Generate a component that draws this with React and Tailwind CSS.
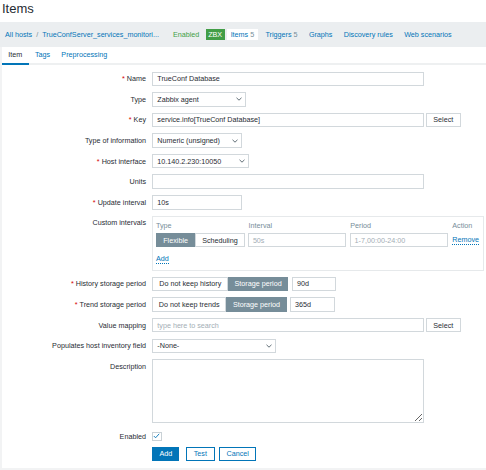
import React from "react";

const FONT = { fontFamily: '"Liberation Sans", Arial, sans-serif' };

function Chevron() {
  return (
    <svg width="6" height="4" viewBox="0 0 6 4" className="shrink-0">
      <polyline points="0.5,0.8 3,3.2 5.5,0.8" fill="none" stroke="#4f5f68" strokeWidth="0.9" />
    </svg>
  );
}

function Row({ label, req, children, top = false }) {
  return (
    <div className={"flex " + (top ? "items-start" : "items-center h-[14.5px]")}>
      <div className="w-[144px] h-[14.5px] flex items-center justify-end text-[#1f2c33] whitespace-nowrap">
        {req && <span className="text-[#d40000] mr-[2px]">*</span>}
        {label}
      </div>
      <div className="ml-[6.3px] flex items-center">{children}</div>
    </div>
  );
}

function Input({ w, value, placeholder }) {
  return (
    <div
      className={
        "h-[14.5px] shrink-0 border border-[#d2d8dc] bg-white flex items-center pl-[4px] whitespace-nowrap overflow-hidden " + w
      }
    >
      {value ? (
        <span className="text-[#1f2c33]">{value}</span>
      ) : (
        <span className="text-[#a3aeb5]">{placeholder}</span>
      )}
    </div>
  );
}

function Select({ w, value }) {
  return (
    <div
      className={
        "h-[14.5px] border border-[#d2d8dc] bg-white flex items-center justify-between pl-[4px] pr-[3px] " + w
      }
    >
      <span className="text-[#1f2c33] whitespace-nowrap">{value}</span>
      <Chevron />
    </div>
  );
}

function GreyButton({ children }) {
  return (
    <div className="ml-[1.5px] h-[14.5px] w-[35px] border border-[#d2d8dc] bg-white flex items-center justify-center text-[#1f2c33]">
      {children}
    </div>
  );
}

function Segmented({ left, right, lw, rw }) {
  return (
    <div className="flex h-[14.5px] shrink-0">
      <div className={"border border-[#d2d8dc] bg-white flex items-center justify-center text-[#1f2c33] whitespace-nowrap " + lw}>{left}</div>
      <div className={"bg-[#768d99] border border-[#768d99] flex items-center justify-center text-white whitespace-nowrap " + rw}>{right}</div>
    </div>
  );
}

export default function App() {
  return (
    <div className="w-[486px] h-[470px] overflow-hidden bg-white text-[7.2px] leading-none" style={FONT}>
      {/* title */}
      <div className="h-[22px] pl-[2px] pt-[2px]">
        <h1 className="text-[13px] leading-none text-[#1f2c33]">Items</h1>
      </div>

      {/* host nav */}
      <div className="h-[25px] bg-[#ebeef0] flex items-center pl-[5px]">
        <span className="text-[#0275b8]">All hosts</span>
        <span className="text-[#768d99] mx-[4px]">/</span>
        <span className="text-[#0275b8]">TrueConfServer_services_monitori...</span>
        <span className="text-[#429e47] ml-[14px]">Enabled</span>
        <span className="ml-[6.3px] bg-[#429e47] text-white h-[10.6px] px-[2.5px] flex items-center">ZBX</span>
        <div className="ml-[2.5px] flex items-center gap-[4.3px]">
          <span className="bg-white h-[11.4px] px-[3.5px] flex items-center text-[#0275b8]">
            Items<span className="text-[#768d99] ml-[2px]">5</span>
          </span>
          <span className="px-[3.5px] text-[#0275b8]">
            Triggers<span className="text-[#768d99] ml-[2px]">5</span>
          </span>
          <span className="px-[3.5px] text-[#0275b8]">Graphs</span>
          <span className="px-[3.5px] text-[#0275b8]">Discovery rules</span>
          <span className="px-[3.5px] text-[#0275b8]">Web scenarios</span>
        </div>
      </div>

      {/* body */}
      <div className="bg-[#f2f3f4] pl-[2px] pb-[3px]">
        <div className="bg-white">
          {/* tabs */}
          <div className="h-[17.5px] flex items-end border-b-2 border-[#eef0f1]">
            <div className="h-[17.5px] px-[6.3px] flex items-center border-b-2 border-[#0275b8] -mb-[2px] text-[#1f2c33]">Item</div>
            <div className="h-[15.5px] px-[6.3px] flex items-center text-[#0275b8]">Tags</div>
            <div className="h-[15.5px] px-[5px] flex items-center text-[#0275b8]">Preprocessing</div>
          </div>

          {/* form */}
          <div className="pt-[7px] pb-[7px] flex flex-col gap-[6.1px]">
            <Row label="Name" req>
              <Input w="w-[272px]" value="TrueConf Database" />
            </Row>
            <Row label="Type">
              <Select w="w-[93.5px]" value="Zabbix agent" />
            </Row>
            <Row label="Key" req>
              <Input w="w-[272px]" value="service.info[TrueConf Database]" />
              <GreyButton>Select</GreyButton>
            </Row>
            <Row label="Type of information">
              <Select w="w-[89.5px]" value="Numeric (unsigned)" />
            </Row>
            <Row label="Host interface" req>
              <Select w="w-[96.5px]" value="10.140.2.230:10050" />
            </Row>
            <Row label="Units">
              <Input w="w-[272px]" value="" />
            </Row>
            <Row label="Update interval" req>
              <Input w="w-[90px]" value="10s" />
            </Row>
            <Row label="Custom intervals" top>
              <div className="w-[332px] h-[55px] border border-[#e6e9eb] pl-[2.7px] pt-[4px]">
                <div className="grid grid-cols-[88.6px_98.4px_98.4px_auto] gap-x-[3.3px] text-[#768d99]">
                  <div className="h-[10px] flex items-center">Type</div>
                  <div className="h-[10px] flex items-center pl-[0.7px]">Interval</div>
                  <div className="h-[10px] flex items-center pl-[0.7px]">Period</div>
                  <div className="h-[10px] flex items-center pl-[1px]">Action</div>
                  <div className="mt-[2.7px] flex h-[14px]">
                    <div className="bg-[#768d99] border border-[#768d99] w-[39.3px] flex items-center justify-center text-white">Flexible</div>
                    <div className="border border-[#d2d8dc] w-[49.3px] flex items-center justify-center text-[#1f2c33]">Scheduling</div>
                  </div>
                  <div className="mt-[2.7px] h-[14px] border border-[#d2d8dc] flex items-center pl-[4px] text-[#a3aeb5]">50s</div>
                  <div className="mt-[2.7px] h-[14px] border border-[#d2d8dc] flex items-center pl-[4px] text-[#a3aeb5]">1-7,00:00-24:00</div>
                  <div className="mt-[2.7px] h-[14px] flex items-center pl-[1px]">
                    <span className="text-[#0275b8] border-b border-dotted border-[#0275b8] leading-[1.1]">Remove</span>
                  </div>
                </div>
                <div className="mt-[7px] h-[10px] flex items-center">
                  <span className="text-[#0275b8] border-b border-dotted border-[#0275b8] leading-[1.1]">Add</span>
                </div>
              </div>
            </Row>
            <Row label="History storage period" req>
              <Segmented left="Do not keep history" right="Storage period" lw="w-[76px]" rw="w-[59.7px]" />
              <div className="ml-[4px]">
                <Input w="w-[44px]" value="90d" />
              </div>
            </Row>
            <Row label="Trend storage period" req>
              <Segmented left="Do not keep trends" right="Storage period" lw="w-[73.7px]" rw="w-[61px]" />
              <div className="ml-[3px]">
                <Input w="w-[45px]" value="365d" />
              </div>
            </Row>
            <Row label="Value mapping">
              <Input w="w-[272px]" placeholder="type here to search" />
              <GreyButton>Select</GreyButton>
            </Row>
            <Row label="Populates host inventory field">
              <Select w="w-[124px]" value="-None-" />
            </Row>
            <Row label="Description" top>
              <textarea
                className="w-[272px] h-[64px] border border-[#d2d8dc] bg-white block outline-none"
                defaultValue=""
              />
            </Row>
            <Row label="Enabled">
              <div className="w-[9.4px] h-[8.6px] border border-[#c9d1d6] bg-white flex items-center justify-center">
                <svg width="7" height="6" viewBox="0 0 7 6">
                  <polyline points="0.8,3 2.6,4.8 6.2,0.8" fill="none" stroke="#0275b8" strokeWidth="0.9" />
                </svg>
              </div>
            </Row>
            <div className="flex items-center -mt-[3.3px] pl-[150.3px]">
              <div className="h-[14.3px] w-[27px] bg-[#0275b8] text-white flex items-center justify-center">Add</div>
              <div className="ml-[6.4px] h-[14.3px] w-[29.3px] border border-[#0275b8] text-[#0275b8] flex items-center justify-center">Test</div>
              <div className="ml-[4.3px] h-[14.3px] w-[37px] border border-[#0275b8] text-[#0275b8] flex items-center justify-center">Cancel</div>
            </div>
          </div>
        </div>
      </div>
    </div>
  );
}
